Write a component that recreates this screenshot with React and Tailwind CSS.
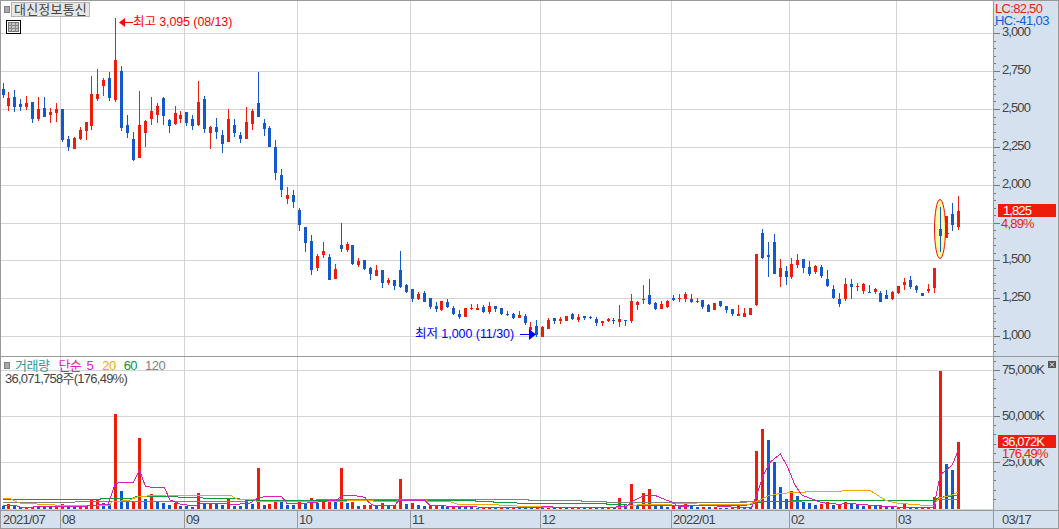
import React from 'react';

const RED = '#ee1c0a';
const BLUE = '#1259cc';
const GRID = '#d4d4d4';

// [zoomX, colour, wickTop, bodyTop, bodyBottom, wickBottom], read at 3x from an origin
const candleGroups = [
  [0, 70, [
    [10,'b',39,57,75,84],[25,'r',66,84,108,123],[43,'b',60,81,111,126],[61,'b',87,102,111,123],[79,'r',78,99,111,120],
    [97,'b',96,96,147,159],[115,'r',81,117,147,153],[133,'b',81,114,141,141],[151,'r',114,126,135,159],[169,'r',99,117,129,156],
    [187,'b',117,117,210,216],[205,'b',198,207,231,243],[223,'r',201,204,237,237],[241,'r',171,180,207,210],[259,'r',156,156,183,210],
    [274,'r',18,72,168,180],[292,'r',-3,72,87,93],[310,'r',24,30,48,78],[328,'b',6,24,84,93],[346,'r',-156,-30,90,96],
    [364,'b',-12,3,174,183],[382,'b',135,165,189,204],[400,'b',186,207,270,273],[418,'r',63,165,264,264],[436,'r',150,153,189,231],
    [454,'r',81,123,147,165],[472,'r',99,108,135,159],[490,'b',81,84,138,165],[508,'b',147,150,168,189],[526,'r',108,129,162,165],
    [541,'r',123,135,147,159],[559,'b',126,126,159,168],[577,'b',135,147,168,180],[595,'r',33,96,165,168],[613,'b',78,87,177,189],
    [631,'r',168,171,189,237],[649,'b',144,171,186,207],[667,'b',180,195,222,249],[685,'r',117,147,216,216],[703,'b',147,165,189,201],
    [721,'b',186,195,207,219],[739,'r',111,156,207,207],[757,'r',117,123,162,180],[775,'b',6,99,141,141],[793,'b',147,159,177,198],
    [808,'b',168,174,231,231],
  ]],
  [260, 160, [
    [46,'b',-60,-39,38,60],[64,'b',27,45,90,111],[82,'r',81,105,117,132],[100,'b',90,105,126,144],[118,'b',144,150,195,213],
    [136,'b',201,201,249,276],[154,'b',225,243,330,345],[172,'r',282,288,324,333],[190,'r',246,273,285,294],[208,'b',282,291,360,360],
    [226,'r',312,327,357,357],[244,'b',189,255,267,276],[262,'r',246,252,270,276],[277,'b',255,255,312,315],[295,'r',294,303,315,321],
    [313,'b',300,300,327,330],[331,'b',321,324,342,360],[349,'r',315,330,348,348],[367,'b',330,330,369,384],[385,'r',354,360,369,375],
    [403,'b',360,360,378,390],[421,'b',273,330,381,384],[439,'b',372,375,396,399],[457,'b',387,387,417,426],[475,'r',396,402,417,420],
    [493,'b',393,399,426,426],[511,'b',414,414,441,447],[529,'b',426,438,447,456],[544,'r',423,423,450,453],[562,'b',417,426,441,444],
    [580,'b',438,444,462,465],[598,'b',450,462,471,477],[616,'r',444,444,471,471],[634,'r',432,444,447,450],[652,'r',432,444,450,450],
    [670,'b',435,441,456,459],[688,'r',426,438,456,462],[706,'b',438,438,447,456],[724,'b',444,444,462,465],[742,'b',453,462,465,468],
    [760,'b',459,462,474,477],[778,'r',453,465,474,474],[796,'b',462,468,489,495],[811,'r',486,501,510,525],
  ]],
  [530, 270, [
    [19,'b',150,168,195,201],[37,'r',168,171,201,201],[55,'r',144,150,177,177],[73,'b',144,144,153,162],[91,'r',141,147,153,162],
    [109,'r',138,138,153,153],[127,'b',129,132,147,150],[145,'r',132,141,150,156],[163,'b',138,138,144,150],[181,'b',138,141,144,147],
    [199,'b',141,147,159,168],[217,'r',153,153,159,168],[235,'r',144,147,153,156],[250,'b',144,150,153,162],[268,'r',105,147,156,171],
    [286,'b',150,150,153,168],[304,'r',72,93,153,159],[322,'r',93,96,105,120],[340,'r',45,87,90,102],[358,'b',27,75,102,105],
    [376,'b',96,99,117,120],[394,'r',93,102,117,117],[412,'r',90,93,111,114],[430,'b',75,84,90,93],[448,'r',72,84,87,96],
    [466,'r',66,72,87,96],[484,'b',72,87,96,99],[502,'r',84,93,96,99],[517,'b',90,90,111,117],[535,'b',102,105,126,126],
    [553,'r',99,99,120,120],[571,'b',93,93,108,111],[589,'b',108,108,120,129],[607,'b',117,117,132,138],[625,'r',105,132,138,138],
    [643,'r',114,129,141,141],[661,'r',114,114,135,135],
  ]],
  [740, 220, [
    [50,'r',102,102,255,258],[68,'b',27,39,114,117],[86,'b',66,105,111,171],[103,'b',42,66,162,162],[121,'r',117,144,171,201],
    [139,'b',138,153,171,195],[155,'r',114,132,171,177],[172,'r',102,120,135,144],[190,'b',117,117,144,159],[208,'b',123,141,162,168],
    [226,'r',135,138,156,162],[244,'b',135,141,168,174],[262,'b',150,177,198,201],[280,'b',195,207,234,237],[298,'b',219,237,252,261],
    [316,'r',174,192,237,243],[334,'b',177,192,201,237],[352,'r',189,198,201,213],[370,'r',189,192,213,222],[388,'b',195,216,219,219],
    [406,'r',204,207,216,222],[421,'b',213,219,246,246],[439,'b',210,225,237,237],[457,'r',213,216,237,240],[475,'r',198,198,219,222],
    [493,'r',174,186,195,210],[511,'b',168,180,201,207],[529,'b',195,198,210,219],[547,'b',219,219,228,228],[565,'r',192,207,213,219],
    [583,'r',144,144,204,219],
  ]],
  [900, 180, [
    [139,'r',108,108,174,174],[157,'b',69,102,135,153],[175,'r',48,93,141,150],
  ]],
];

// [zoomX, colour, top]
const volumeGroups = [
  [0, 350, [
    [10,'b',468],[25,'r',462],[43,'b',468],[61,'b',471],[79,'r',471],[97,'r',471],[115,'b',471],[133,'b',471],[151,'b',471],[169,'r',468],
    [187,'r',462],[205,'b',471],[223,'b',471],[241,'r',471],[259,'r',468],[274,'r',450],[292,'r',450],[310,'b',459],[328,'b',462],[346,'r',192],
    [364,'b',423],[382,'b',456],[400,'r',456],[418,'r',264],[436,'b',447],[454,'r',432],[472,'b',456],[490,'b',459],[508,'b',465],[526,'r',459],
    [541,'b',468],[559,'b',468],[577,'b',471],[595,'r',429],[613,'b',462],[631,'r',459],[649,'b',462],[667,'b',465],[685,'r',447],[703,'b',468],
    [721,'b',468],[739,'r',456],
  ]],
  [250, 440, [
    [-11,'b',177],[7,'b',192],[25,'r',84],[43,'b',195],[58,'r',192],[76,'r',186],[94,'b',186],[112,'b',195],[130,'b',195],[148,'r',186],[166,'b',192],
    [184,'r',174],[202,'b',189],[220,'r',186],[238,'r',186],[256,'b',186],[274,'r',84],[292,'b',189],[307,'r',186],[325,'b',198],[343,'r',195],
    [361,'r',195],[379,'b',198],[397,'r',189],[415,'b',198],[433,'r',195],[451,'r',117],[469,'b',192],[487,'r',189],[505,'b',195],[523,'b',198],
    [541,'r',195],[559,'r',195],[577,'b',195],[592,'b',201],[610,'r',201],[628,'b',201],[646,'b',201],[664,'b',201],[682,'b',204],[700,'r',204],
    [718,'r',204],[736,'b',204],[754,'r',204],[772,'b',204],[790,'r',204],[808,'b',204],[826,'b',204],[844,'b',204],[862,'r',204],[877,'b',204],
    [895,'r',204],[913,'b',204],[931,'r',204],[949,'b',204],[967,'r',204],[985,'r',204],[1003,'b',204],[1021,'r',204],[1039,'b',204],[1057,'b',204],
    [1075,'r',204],[1093,'b',204],[1108,'r',174],[1126,'b',195],[1144,'r',132],[1162,'b',198],[1180,'r',159],[1198,'r',147],[1216,'b',195],[1234,'b',198],
    [1252,'b',201],[1270,'r',198],[1288,'b',195],[1306,'r',192],[1324,'b',195],[1342,'b',201],[1360,'r',201],[1378,'b',201],[1396,'r',201],[1411,'b',204],
    [1429,'b',204],[1447,'r',204],[1465,'r',198],[1483,'b',204],
  ]],
  [740, 420, [
    [32,'b',264],[50,'r',93],[68,'r',27],[86,'b',60],[103,'b',126],[121,'b',201],[139,'b',237],[155,'r',213],[172,'b',228],[190,'b',246],[208,'b',249],
    [226,'b',255],[244,'r',252],[262,'r',246],[280,'b',255],[298,'r',255],[316,'r',246],[334,'b',252],[352,'b',255],[370,'b',258],[388,'r',258],
    [406,'b',258],[421,'r',255],[439,'b',261],[457,'b',261],[475,'r',261],[493,'r',252],[511,'b',261],[529,'b',261],[547,'r',261],[565,'r',261],[583,'r',231],
  ]],
  [880, 350, [
    [181,'r',63],[199,'b',342],[217,'b',360],[235,'r',276],
  ]],
];

const candles = candleGroups.flatMap(([ox, oy, rows]) =>
  rows.map(([z, c, wt, bt, bb, wb]) => ({
    x: Math.floor(ox + z / 3), c,
    wt: Math.round(oy + wt / 3), bt: Math.round(oy + bt / 3),
    bb: Math.round(oy + bb / 3), wb: Math.round(oy + wb / 3),
  })));

const volumes = volumeGroups.flatMap(([ox, oy, rows]) =>
  rows.map(([z, c, t]) => ({ x: Math.floor(ox + z / 3), c, y: Math.round(oy + t / 3) })));

const toPts = (segs) => segs.flatMap(([ox, oy, p]) =>
  p.map(([x, y]) => `${(ox + x / 3).toFixed(1)},${(oy + y / 3).toFixed(1)}`)).join(' ');

const maPink = toPts([
  [0,350,[[9,468],[40,465],[60,471],[100,471],[130,468],[260,468],[290,465],[325,462],[345,402],[362,396],[400,398],[418,360],[436,408],[450,411],[492,411],[510,450],[525,456],[540,462],[560,465],[580,468],[600,462],[620,459],[680,459],[690,462],[720,462],[740,459]]],
  [250,440,[[0,189],[25,174],[50,169],[95,170],[110,189],[170,189],[205,186],[260,180],[275,167],[315,167],[345,172],[355,186],[370,196],[435,196],[445,183],[525,182],[540,196],[585,196],[590,200],[680,201],[870,203],[885,199],[905,199],[910,203],[1090,203],[1105,199],[1130,199],[1150,183],[1180,168],[1215,166],[1235,175],[1265,186],[1285,199],[1310,199],[1340,195],[1400,198],[1470,203]]],
  [740,420,[[35,262],[50,225],[70,165],[90,127],[121,102],[140,135],[165,195],[185,225],[215,237],[240,246],[260,250],[300,253],[320,250],[360,253],[420,258],[470,261],[583,261]]],
  [880,350,[[163,465],[181,375],[199,360],[217,345],[235,300]]],
]);
const maOrange = toPts([
  [0,350,[[9,445],[30,445],[50,456],[60,459],[105,459],[110,462],[160,462],[165,465],[330,465],[335,456],[390,450],[410,441],[440,438],[500,435],[690,435],[710,447],[735,447]]],
  [250,440,[[0,178],[12,178],[20,184],[260,184],[360,181],[375,184],[440,184],[445,180],[530,180],[535,185],[600,185],[625,193],[745,193],[750,197],[800,197],[805,200],[870,200],[885,203],[1100,203],[1130,197],[1160,195],[1200,192],[1230,195],[1265,192],[1290,189],[1340,192],[1490,193]]],
  [740,420,[[0,252],[30,252],[60,240],[85,228],[120,220],[195,217],[200,214],[305,214],[310,211],[390,211],[435,240],[455,246],[470,249],[505,252],[540,255],[583,255]]],
  [880,350,[[165,462],[175,445],[195,440],[215,435],[235,425]]],
]);
const maGreen = toPts([
  [0,350,[[9,448],[300,448],[305,444],[400,444],[410,438],[530,438],[535,441],[605,441],[610,444],[710,444],[720,447]]],
  [250,440,[[0,181],[657,181],[675,181],[676,184],[730,184],[730,187],[800,187],[802,190],[1068,190],[1068,193],[1130,193],[1130,195],[1490,195]]],
  [740,420,[[0,258],[50,250],[70,245],[190,242],[583,242]]],
  [880,350,[[165,450],[175,443],[235,435]]],
]);
const maGray = toPts([
  [0,350,[[9,457],[740,454]]],
  [250,440,[[0,181],[660,178],[835,178],[835,181],[995,181],[995,184],[1068,184],[1068,187],[1270,187],[1490,187]]],
  [740,420,[[0,246],[190,243],[583,243]]],
  [880,350,[[165,450],[175,450],[235,447]]],
]);

const vGrid = [60, 184, 297, 410, 540, 671, 789, 896];
const priceGrid = [33, 71, 109, 147, 185, 223, 260, 298, 336];
const volGrid = [370, 416, 462, 509];

const priceLabels = [['3,000', 33], ['2,750', 71], ['2,500', 109], ['2,250', 147], ['2,000', 185], ['1,500', 260], ['1,250', 298], ['1,000', 336]];
const volLabels = [['75,000K', 370], ['50,000K', 416], ['25,000K', 462]];
const timeLabels = [['2021/07', 2, false], ['08', 61, true], ['09', 185, true], ['10', 298, true], ['11', 411, true], ['12', 541, true], ['2022/01', 672, true], ['02', 790, true], ['03', 897, true]];

const colour = (c) => (c === 'r' ? RED : BLUE);

function Grid({ rows, top, bottom }) {
  return (
    <>
      {vGrid.map((x) => <rect key={x} x={x} y={top} width="1" height={bottom - top} fill={GRID} />)}
      {rows.map((y) => <rect key={y} x="1" y={y} width="992" height="1" fill={GRID} />)}
    </>
  );
}

function Ticks({ major, from, to }) {
  const ticks = [];
  major.forEach((y, i) => {
    ticks.push(<rect key={`m${y}`} x="994" y={y} width="6" height="1" fill="#777" />);
    for (let k = 1; k < 5; k++) {
      const step = i + 1 < major.length ? (major[i + 1] - y) / 5 : (major[1] - major[0]) / 5;
      const ty = Math.round(y + step * k);
      if (ty < to) ticks.push(<rect key={`t${y}-${k}`} x="994" y={ty} width="2" height="1" fill="#777" />);
    }
  });
  const step0 = (major[1] - major[0]) / 5;
  for (let k = 1; k < 5; k++) {
    const ty = Math.round(major[0] - step0 * k);
    if (ty > from) ticks.push(<rect key={`u${k}`} x="994" y={ty} width="2" height="1" fill="#777" />);
  }
  return ticks;
}

const axisText = 'absolute left-[8px] h-[12px] text-[13px] leading-[12px] tracking-[-0.9px] whitespace-nowrap text-[#444]';

export default function App() {
  return (
    <div className="w-[1059px] h-[529px] flex flex-col border-l border-r border-[#999] bg-white font-['Liberation_Sans','Noto_Sans_CJK_KR',sans-serif] text-[12px] overflow-hidden">
      {/* Price pane */}
      <div className="h-[356px] flex border-t border-[#999]">
        <div className="relative w-[992px] h-full">
          <svg className="block w-[992px] h-[355px]" viewBox="1 1 992 355" shapeRendering="crispEdges">
            <Grid rows={priceGrid} top={1} bottom={356} />
            {candles.map((k, i) => (
              <g key={i} fill={colour(k.c)}>
                <rect x={k.x} y={k.wt} width="1" height={Math.max(k.wb - k.wt, 1)} />
                <rect x={k.x - 1} y={k.bt} width="3" height={Math.max(k.bb - k.bt, 1)} />
              </g>
            ))}
            <rect x="948" y="233" width="1" height="1" fill={RED} />
            <g shapeRendering="auto">
              <ellipse cx="940" cy="229" rx="5.5" ry="29.5" fill="#fdfb9c" stroke="#e81010" strokeWidth="1" />
            </g>
            <rect x="940" y="207" width="1" height="45" fill={BLUE} />
            <rect x="939" y="229" width="3" height="7" fill={BLUE} />
            <rect x="124" y="22" width="9" height="1" fill="#ff0000" />
            <polygon points="119,22.5 125,18 125,27" fill="#ff0000" shapeRendering="auto" />
            <rect x="520" y="334" width="10" height="1" fill="#0000ff" />
            <polygon points="536,334.5 529,329 529,340" fill="#0000ff" shapeRendering="auto" />
          </svg>

          <div className="absolute left-[3px] top-[5px] w-[6px] h-[7px] bg-[#a8a8a8] border border-[#808080]" />
          <div className="absolute left-[10px] top-[1px] w-[79px] h-[15px] bg-[#e6e6e6] border border-[#b4b4b4] text-center text-[#444] leading-[13px] text-[13px] tracking-[0.2px]">대신정보통신</div>
          <div className="absolute left-[5px] top-[19px] w-[15px] h-[14px] border border-black p-px">
            <div className="w-full h-full border border-[#777] grid grid-cols-3 grid-rows-3 bg-[#8a8a8a] gap-px">
              <span className="bg-[#c4c4c4]" /><span className="bg-[#c4c4c4]" /><span className="bg-[#c4c4c4]" />
              <span className="bg-[#c4c4c4]" /><span className="bg-[#c4c4c4]" /><span className="bg-[#c4c4c4]" />
              <span className="bg-[#c4c4c4]" /><span className="bg-[#c4c4c4]" /><span className="bg-[#c4c4c4]" />
            </div>
          </div>
          <div className="absolute left-[132px] top-[14px] leading-[14px] text-[12.5px] tracking-[-0.1px] text-[#ff0000] whitespace-nowrap">최고 3,095 (08/13)</div>
          <div className="absolute left-[414px] top-[326px] leading-[14px] text-[12.5px] tracking-[-0.05px] text-[#0000ff] whitespace-nowrap">최저 1,000 (11/30)</div>
        </div>

        <div className="relative flex-1 h-full bg-[#d6e1ef] border-l border-[#999]">
          <svg className="absolute left-0 top-0 w-[64px] h-[355px]" viewBox="994 1 64 355" shapeRendering="crispEdges">
            <Ticks major={priceGrid} from={24} to={356} />
          </svg>
          <div className="absolute left-px top-[2px] h-[11px] text-[13px] leading-[11px] tracking-[-0.7px] text-[#ee1c0a] whitespace-nowrap">LC:82,50</div>
          <div className="absolute left-px top-[14px] h-[11px] text-[13px] leading-[11px] tracking-[-0.6px] text-[#0a5fd8] whitespace-nowrap">HC:-41,03</div>
          {priceLabels.map(([t, y]) => (
            <div key={t} className={axisText} style={{ top: y - 8 }}>{t}</div>
          ))}
          <div className="absolute left-[4px] top-[203px] w-[58px] h-[13px] bg-[#ee1c0a] text-white pl-[5px] text-[13px] leading-[13px] tracking-[-0.9px]">1,825</div>
          <div className="absolute left-[7px] top-[217px] text-[13px] leading-[11px] tracking-[-0.8px] text-[#ee1c0a] whitespace-nowrap">4,89%</div>
        </div>
      </div>

      {/* Volume pane */}
      <div className="h-[154px] flex border-t border-[#999]">
        <div className="relative w-[992px] h-full">
          <svg className="block w-[992px] h-[153px]" viewBox="1 357 992 153" shapeRendering="crispEdges">
            <Grid rows={volGrid} top={357} bottom={510} />
            {volumes.map((v, i) => (
              <rect key={i} x={v.x - 1} y={v.y} width="3" height={509 - v.y} fill={colour(v.c)} />
            ))}
            <g fill="none" strokeWidth="1">
              <polyline points={maGray} stroke="#808080" />
              <polyline points={maGreen} stroke="#109a3c" />
              <rect x="831" y="500" width="103" height="1" fill="#109a3c" />
              <polyline points={maOrange} stroke="#f0a800" />
              <polyline points={maPink} stroke="#d820b8" />
            </g>
          </svg>
          <div className="absolute left-[3px] top-[5px] w-[6px] h-[7px] bg-[#a8a8a8] border border-[#808080]" />
          <div className="absolute left-[14px] top-[2px] flex items-center text-[13px] leading-[14px] tracking-[-0.5px] whitespace-nowrap">
            <span className="text-[#2a9a9a]">거래량</span>
            <span className="ml-[9px] text-[#e020c0] [word-spacing:2px]">단순 5</span>
            <span className="ml-[9px] text-[#f0a800]">20</span>
            <span className="ml-[8px] text-[#109040]">60</span>
            <span className="ml-[8px] text-[#808080]">120</span>
          </div>
          <div className="absolute left-[4px] top-[15px] text-[13px] leading-[14px] tracking-[-0.75px] text-[#444] whitespace-nowrap">36,071,758주(176,49%)</div>
        </div>

        <div className="relative flex-1 h-full bg-[#d6e1ef] border-l border-[#999]">
          <svg className="absolute left-0 top-0 w-[64px] h-[153px]" viewBox="994 357 64 153" shapeRendering="crispEdges">
            <Ticks major={volGrid.slice(0, 3)} from={358} to={510} />
          </svg>
          <div className="absolute right-[2px] top-[4px] w-[8px] h-[7px] bg-[#555] flex items-center justify-center">
            <svg width="6" height="5" viewBox="0 0 6 5"><path d="M1 0.5 L5 4.5 M5 0.5 L1 4.5" stroke="#fff" strokeWidth="1" /></svg>
          </div>
          {volLabels.map(([t, y]) => (
            <div key={t} className={axisText} style={{ top: y - 363 }}>{t}</div>
          ))}
          <div className="absolute left-[4px] top-[78px] w-[58px] h-[13px] bg-[#ee1c0a] text-white pl-[4px] text-[13px] leading-[13px] tracking-[-0.9px]">36,072K</div>
          <div className="absolute left-[8px] top-[91px] w-[50px] h-[11px] bg-[#d6e1ef] text-[13px] leading-[11px] tracking-[-0.8px] text-[#ee1c0a] whitespace-nowrap">176,49%</div>
        </div>
      </div>

      {/* Time axis */}
      <div className="h-[19px] flex border-t border-b border-[#999] bg-[#d6e1ef]">
        <div className="relative w-[992px] h-full">
          {timeLabels.map(([t, x, line]) => (
            <div key={t} className={`absolute top-0 h-full pl-px text-[13px] leading-[17px] tracking-[-0.7px] text-[#444] whitespace-nowrap ${line ? 'border-l border-[#999]' : ''}`} style={{ left: line ? x - 2 : x - 1 }}>{t}</div>
          ))}
        </div>
        <div className="flex-1 border-l border-[#999] pl-[8px] text-[13px] leading-[17px] tracking-[-0.7px] text-[#444]">03/17</div>
      </div>
    </div>
  );
}
